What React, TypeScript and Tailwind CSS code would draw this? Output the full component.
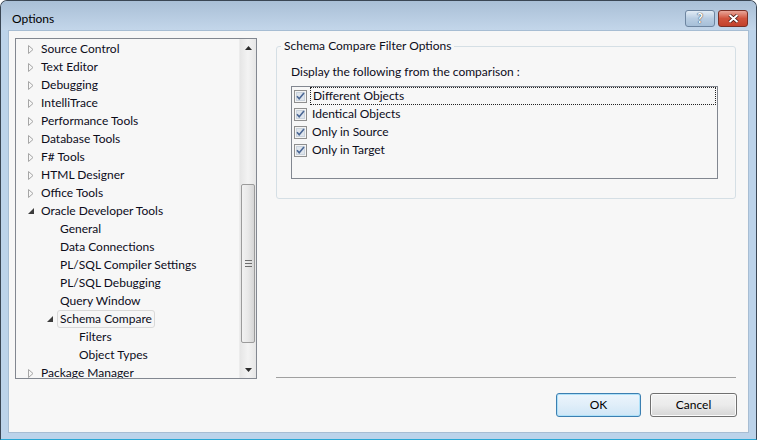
import React from 'react'

const font = { fontFamily: '"Segoe UI", Lato, "Noto Sans", sans-serif' }

type Row = { label: string; level: 0 | 1 | 2; state?: 'closed' | 'open'; selected?: boolean }

const treeRows: Row[] = [
  { label: 'Source Control', level: 0, state: 'closed' },
  { label: 'Text Editor', level: 0, state: 'closed' },
  { label: 'Debugging', level: 0, state: 'closed' },
  { label: 'IntelliTrace', level: 0, state: 'closed' },
  { label: 'Performance Tools', level: 0, state: 'closed' },
  { label: 'Database Tools', level: 0, state: 'closed' },
  { label: 'F# Tools', level: 0, state: 'closed' },
  { label: 'HTML Designer', level: 0, state: 'closed' },
  { label: 'Office Tools', level: 0, state: 'closed' },
  { label: 'Oracle Developer Tools', level: 0, state: 'open' },
  { label: 'General', level: 1 },
  { label: 'Data Connections', level: 1 },
  { label: 'PL/SQL Compiler Settings', level: 1 },
  { label: 'PL/SQL Debugging', level: 1 },
  { label: 'Query Window', level: 1 },
  { label: 'Schema Compare', level: 1, state: 'open', selected: true },
  { label: 'Filters', level: 2 },
  { label: 'Object Types', level: 2 },
  { label: 'Package Manager', level: 0, state: 'closed' },
]

const filters = ['Different Objects', 'Identical Objects', 'Only in Source', 'Only in Target']

function Arrow({ state }: { state?: 'closed' | 'open' }) {
  if (state === 'closed')
    return (
      <svg width="6" height="9" viewBox="0 0 6 9" className="shrink-0">
        <path d="M0.5 0.5 L5 4.5 L0.5 8.5 Z" fill="none" stroke="#a6a6a6" strokeWidth="1" />
      </svg>
    )
  if (state === 'open')
    return (
      <svg width="6" height="6" viewBox="0 0 6 6" className="shrink-0">
        <path d="M6 0 L6 6 L0 6 Z" fill="#3c3c3c" />
      </svg>
    )
  return <span className="w-[6px] shrink-0" />
}

function TreeRow({ row }: { row: Row }) {
  const pad = row.level === 0 ? 'pl-[12px]' : row.level === 1 ? 'pl-[31px]' : 'pl-[50px]'
  return (
    <div className={`flex items-center h-[18px] ${pad}`}>
      <span className="w-[13px] flex items-center">
        <Arrow state={row.state} />
      </span>
      {row.selected ? (
        <span className="h-[18px] flex items-center px-[2px] -ml-[3px] rounded-[3px] border border-[#d9d9d9] bg-[#f6f6f6] leading-none">
          {row.label}
        </span>
      ) : (
        <span className="leading-none">{row.label}</span>
      )}
    </div>
  )
}

function Scrollbar() {
  return (
    <div className="w-[17px] h-full flex flex-col bg-gradient-to-r from-[#e6e6e6] via-[#f3f3f3] to-[#e6e6e6] border-l border-[#ececec]">
      <div className="h-[17px] flex items-center justify-center">
        <svg width="7" height="4" viewBox="0 0 7 4"><path d="M3.5 0 L7 4 L0 4 Z" fill="#2c2c2c" /></svg>
      </div>
      <div className="h-[128px]" />
      <div className="h-[159px] mx-[1px] rounded-[2px] border border-[#9b9b9b] bg-gradient-to-r from-[#f2f2f2] via-[#e8e8e8] to-[#d6d6d6] flex flex-col items-center justify-center gap-[2px]">
        <div className="w-[7px] h-[1px] bg-[#6e6e6e]" />
        <div className="w-[7px] h-[1px] bg-[#6e6e6e]" />
        <div className="w-[7px] h-[1px] bg-[#6e6e6e]" />
      </div>
      <div className="flex-1" />
      <div className="h-[17px] flex items-center justify-center">
        <svg width="7" height="4" viewBox="0 0 7 4"><path d="M0 0 L7 0 L3.5 4 Z" fill="#2c2c2c" /></svg>
      </div>
    </div>
  )
}

function Check() {
  return (
    <svg width="13" height="13" viewBox="0 0 13 13" className="shrink-0">
      <rect x="0.5" y="0.5" width="12" height="12" fill="#f4f4f4" stroke="#8f8f8f" />
      <rect x="2" y="2" width="9" height="9" fill="#c9d2dc" />
      <rect x="3" y="3" width="7" height="7" fill="#dfe5ec" />
      <path d="M3 6.2 L5.2 8.8 L10 3" fill="none" stroke="#4a6694" strokeWidth="1.6" />
    </svg>
  )
}

function TitleButton({ kind }: { kind: 'help' | 'close' }) {
  const bg =
    kind === 'close'
      ? 'bg-gradient-to-b from-[#e8a69a] via-[#d0533d] to-[#c3412b] border-[#7a2f25]'
      : 'bg-gradient-to-b from-[#e2ecf5] via-[#b8cde2] to-[#a6bfd8] border-[#6d85a0]'
  return (
    <div className={`w-[30px] h-[17px] rounded-[3px] border flex items-center justify-center ${bg}`}>
      {kind === 'help' ? (
        <span className="text-white text-[13px] font-bold leading-none [text-shadow:0_0_1px_#2a3a4c,0_0_1px_#2a3a4c]">?</span>
      ) : (
        <svg width="11" height="9" viewBox="0 0 11 9">
          <path d="M1.5 1 L9.5 8 M9.5 1 L1.5 8" stroke="#3a1410" strokeWidth="3.4" />
          <path d="M1.5 1 L9.5 8 M9.5 1 L1.5 8" stroke="#ffffff" strokeWidth="2" />
        </svg>
      )}
    </div>
  )
}

export default function App() {
  return (
    <div className="w-[757px] h-[440px] bg-white" style={font}>
      <div className="w-full h-full flex flex-col rounded-t-[7px] border border-[#3a4654] border-b-[#2aa7d4] bg-[#bcd3ea] overflow-hidden">
        <div className="h-[29px] shrink-0 flex items-center bg-gradient-to-b from-[#a9bfd6] to-[#c3d6ea] pl-[11px] pr-[8px]">
          <span className="text-[12px] text-black mt-[7px]">Options</span>
          <div className="flex-1" />
          <div className="flex gap-[3px] mt-[6px]">
            <TitleButton kind="help" />
            <TitleButton kind="close" />
          </div>
        </div>
        <div className="flex-1 px-[7px] pb-[6px]">
          <div className="w-full h-full bg-[#f7f7f7] border border-[#a7bdd3] flex flex-col text-[12px] text-[#0c0c1a]">
            <div className="flex h-[341px] mt-[7px] pl-[6px]">
              <div className="w-[242px] h-full border border-[#828790] flex overflow-hidden">
                <div className="flex-1 overflow-hidden pt-[1px]">
                  {treeRows.map(r => (
                    <TreeRow key={r.label} row={r} />
                  ))}
                </div>
                <Scrollbar />
              </div>
              <div className="w-[460px] ml-[19px] h-full flex flex-col">
                <fieldset className="border border-[#d5dfe5] rounded-[3px] pl-[14px] pr-[17px] pb-[19px]">
                  <legend className="px-[3px] -ml-[10px] leading-[16px]">Schema Compare Filter Options</legend>
                  <div className="mt-[10px] leading-[16px]">Display the following from the comparison :</div>
                  <div className="mt-[6px] h-[93px] border border-[#828790]">
                    {filters.map((f, i) => (
                      <div key={f} className="h-[18px] flex items-center pl-[2px]">
                        <Check />
                        <span
                          className={`ml-[3px] flex-1 h-[18px] flex items-center pl-[2px] leading-none ${
                            i === 0 ? 'border border-dotted border-[#222] mr-[1px]' : ''
                          }`}
                        >
                          {f}
                        </span>
                      </div>
                    ))}
                  </div>
                </fieldset>
                <div className="flex-1" />
                <div className="h-[1px] bg-[#a0a0a0] mb-[1px]" />
              </div>
            </div>
            <div className="flex justify-end gap-[9px] mt-[14px] pr-[11px]">
              <button className="w-[85px] h-[24px] rounded-[3px] border border-[#3c7fb1] bg-gradient-to-b from-[#ecf5fc] via-[#e0eef9] to-[#cfe6f6] shadow-[inset_0_0_0_1px_#aee1f9] text-[12px] text-black">
                OK
              </button>
              <button className="w-[87px] h-[24px] rounded-[3px] border border-[#707070] bg-gradient-to-b from-[#f2f2f2] via-[#ebebeb] to-[#d6d6d6] shadow-[inset_0_0_0_1px_#fbfbfb] text-[12px] text-black">
                Cancel
              </button>
            </div>
          </div>
        </div>
      </div>
    </div>
  )
}
